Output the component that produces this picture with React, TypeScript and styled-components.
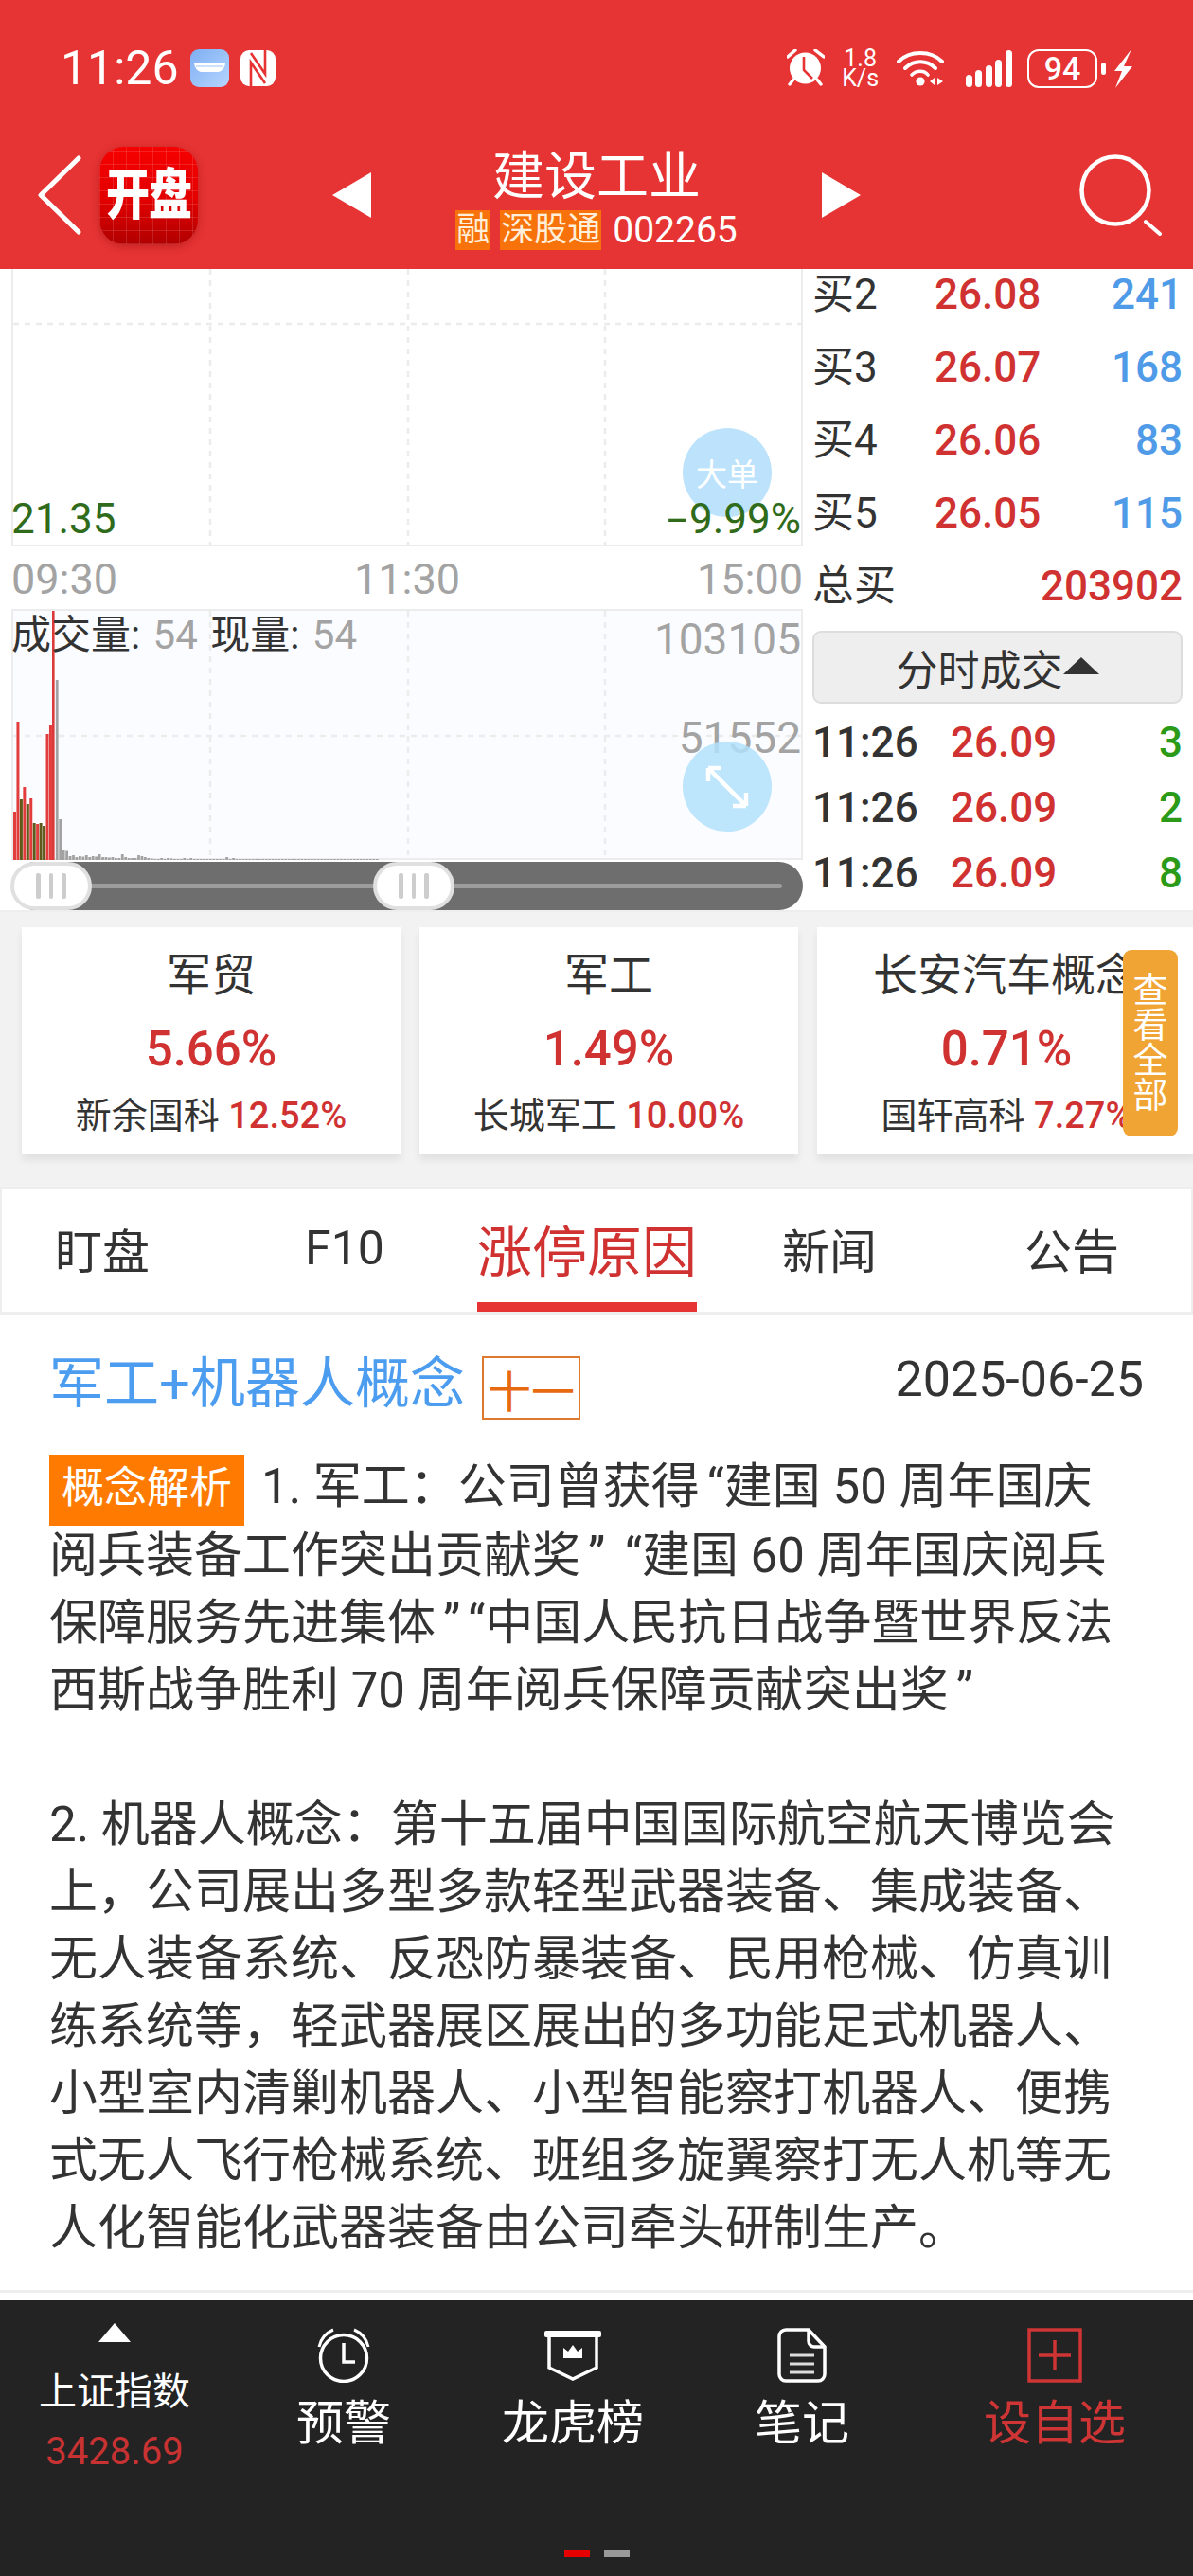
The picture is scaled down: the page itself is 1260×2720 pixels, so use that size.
import React from 'react';
import styled, { createGlobalStyle } from 'styled-components';

const RED = '#e63333';
const PRICE_RED = '#d03232';
const FONT = 'Roboto, "Noto Sans CJK SC", sans-serif';

const bids = [
  { label: '买2', price: '26.08', qty: '241' },
  { label: '买3', price: '26.07', qty: '168' },
  { label: '买4', price: '26.06', qty: '83' },
  { label: '买5', price: '26.05', qty: '115' },
];

const trades = [
  { time: '11:26', price: '26.09', qty: '3' },
  { time: '11:26', price: '26.09', qty: '2' },
  { time: '11:26', price: '26.09', qty: '8' },
];

const sectors = [
  { name: '军贸', pct: '5.66%', stock: '新余国科', stockPct: '12.52%' },
  { name: '军工', pct: '1.49%', stock: '长城军工', stockPct: '10.00%' },
  { name: '长安汽车概念', pct: '0.71%', stock: '国轩高科', stockPct: '7.27%' },
];

const tabs = ['盯盘', 'F10', '涨停原因', '新闻', '公告'];

const redBars = [51, 146, 0, 77, 0, 65, 0, 38, 0, 0, 133, 143];
const greenBars = [0, 0, 64, 0, 59, 0, 39, 0, 39, 36, 0, 0];
const grayBars = [
  190, 43, 10, 9.5, 4, 5, 3, 4, 3.5, 5, 3, 4, 3.5, 6, 3, 3, 2.5, 3, 2, 2, 6, 3, 2, 2, 2, 5, 4, 3, 2, 1.5, 1,
  1, 2, 1, 2, 1.5, 1, 1, 1, 2, 1, 2, 1, 1, 1, 1, 1, 1, 1, 1, 1, 1, 3, 1, 2, 1, 1, 1, 1, 1, 1, 1, 1, 1, 1, 1, 1, 1, 1, 1,
  1, 1, 1, 1, 1, 1, 1, 1, 1, 1, 1, 1, 1, 1, 1, 1, 1, 1, 1, 1, 1, 1, 1, 1, 1, 1, 1, 1, 1,
];

const GridLines = ({ height, rowY }: { height: number; rowY: number }) => (
  <GridSvg viewBox={`0 0 832 ${height}`} width="832" height={height}>
    {[208, 417, 625].map((x) => (
      <line key={x} x1={x} y1="0" x2={x} y2={height} stroke="#ececec" strokeWidth="2.5" strokeDasharray="6 6" />
    ))}
    <line x1="0" y1={rowY} x2="832" y2={rowY} stroke="#ececec" strokeWidth="2.5" strokeDasharray="6 6" />
  </GridSvg>
);

const VolumeBars = () => {
  const h = 263;
  const step = 3.45;
  return (
    <GridSvg viewBox={`0 0 832 ${h}`} width="832" height={h}>
      {redBars.map((v, i) =>
        v ? <rect key={`r${i}`} x={i * step} y={h - v} width="3" height={v} fill="#e23c3c" /> : null,
      )}
      {greenBars.map((v, i) =>
        v ? <rect key={`g${i}`} x={i * step} y={h - v} width="3" height={v} fill="#5e5a1c" /> : null,
      )}
      {grayBars.map((v, i) => (
        <rect key={`n${i}`} x={(i + 13) * step} y={h - v} width="2.8" height={v} fill="#a2a2a2" />
      ))}
      <rect x="41" y="0" width="2.6" height={h} fill="#dc3a3a" />
    </GridSvg>
  );
};

const App = () => (
  <Page>
    <GlobalStyle />
    <Header>
      <StatusBar>
        <StatusLeft>
          <Clock>11:26</Clock>
          <svg width="41" height="40" viewBox="0 0 41 40">
            <defs>
              <linearGradient id="pill" x1="0" y1="0" x2="1" y2="1">
                <stop offset="0" stopColor="#7eaef2" />
                <stop offset="1" stopColor="#b6d6ff" />
              </linearGradient>
            </defs>
            <rect width="41" height="40" rx="9" fill="url(#pill)" />
            <path d="M4 15 H37 Q36 22 30 24 H11 Q5 22 4 15 Z" fill="#fff" />
            <path d="M6 18 H35" stroke="#9cc3f7" strokeWidth="1" />
          </svg>
          <svg width="37" height="38" viewBox="0 0 37 38">
            <rect width="37" height="38" rx="9" fill="#fff" />
            <path d="M11 38 V13 L26 35 M26 0 V25 L11 3" fill="none" stroke={RED} strokeWidth="2.6" />
          </svg>
        </StatusLeft>
        <StatusRight>
          <svg width="40" height="40" viewBox="0 0 40 40">
            <circle cx="19.5" cy="20" r="16.5" fill="#fff" />
            <path d="M18 8 V22 L27 31" fill="none" stroke={RED} strokeWidth="2.6" />
            <path d="M1 8 L9 1 M30 1 L39 8 M3 37 L7 32 M36 37 L32 32" stroke="#fff" strokeWidth="3.4" strokeLinecap="round" />
          </svg>
          <Speed>
            <span>1.8</span>
            <span>K/s</span>
          </Speed>
          <svg width="50" height="37" viewBox="0 0 50 37">
            <path d="M2 11 C14 -1 36 -1 48 11" fill="none" stroke="#fff" strokeWidth="4" strokeLinecap="round" />
            <path d="M9 18 C18 9 32 9 41 18" fill="none" stroke="#fff" strokeWidth="4" strokeLinecap="round" />
            <path d="M16 25 C21 20 29 20 33 25" fill="none" stroke="#fff" strokeWidth="3.6" strokeLinecap="round" />
            <circle cx="25" cy="32" r="4.6" fill="#fff" />
            <path d="M40 28 V36 L35 32 Z M43 28 V36 L49 32 Z" fill="#fff" />
          </svg>
          <SignalBars>
            {[13, 18, 23, 29, 39].map((barHeight) => (
              <SignalBar key={barHeight} $height={barHeight} />
            ))}
          </SignalBars>
          <Battery>
            <BatteryBody>94</BatteryBody>
            <BatteryNub />
          </Battery>
          <svg width="19" height="41" viewBox="0 0 19 41">
            <polygon points="18,0 0,23 8,23 1,41 19,18 10,18" fill="#fff" />
          </svg>
        </StatusRight>
      </StatusBar>
      <NavBar>
        <NavLeft>
          <svg width="46" height="84" viewBox="0 0 46 84">
            <path d="M43 3 L3 42 L43 81" fill="none" stroke="#fff" strokeWidth="5" strokeLinecap="round" strokeLinejoin="round" />
          </svg>
          <Logo>
            <LogoText>开盘</LogoText>
          </Logo>
        </NavLeft>
        <NavCenter>
          <svg width="41" height="48" viewBox="0 0 41 48">
            <polygon points="41,0 41,48 0,24" fill="#fff" />
          </svg>
          <TitleBlock>
            <StockName>建设工业</StockName>
            <StockMeta>
              <StockTag>融</StockTag>
              <StockTag>深股通</StockTag>
              <StockCode>002265</StockCode>
            </StockMeta>
          </TitleBlock>
          <svg width="41" height="48" viewBox="0 0 41 48">
            <polygon points="0,0 0,48 41,24" fill="#fff" />
          </svg>
        </NavCenter>
        <NavRight>
          <svg width="88" height="86" viewBox="0 0 88 86">
            <circle cx="38" cy="38" r="35.5" fill="none" stroke="#fff" strokeWidth="4.5" />
            <path d="M70 71 L85 84" stroke="#fff" strokeWidth="4" strokeLinecap="round" />
          </svg>
        </NavRight>
      </NavBar>
    </Header>

    <Quote>
      <ChartColumn>
        <PricePanel>
          <GridLines height={291} rowY={58} />
          <BigOrder>大单</BigOrder>
          <PriceLow>21.35</PriceLow>
          <PctLow>
            <Dash>-</Dash>9.99%
          </PctLow>
        </PricePanel>
        <TimeAxis>
          <span>09:30</span>
          <span>11:30</span>
          <span>15:00</span>
        </TimeAxis>
        <VolumePanel>
          <GridLines height={263} rowY={132} />
          <VolumeBars />
          <VolumeLegend>
            成交量: <em>54</em> 现量: <em>54</em>
          </VolumeLegend>
          <VolumeMax>103105</VolumeMax>
          <VolumeMid>51552</VolumeMid>
          <ExpandButton>
            <svg width="46" height="46" viewBox="0 0 46 46">
              <path d="M3 3 L43 43 M3 3 V17 M3 3 H17 M43 43 V29 M43 43 H29" fill="none" stroke="#fff" strokeWidth="4.5" />
            </svg>
          </ExpandButton>
        </VolumePanel>
        <Slider>
          <SliderTrack />
          <SliderHandle $left={-1}>
            <i />
            <i />
            <i />
          </SliderHandle>
          <SliderHandle $left={382}>
            <i />
            <i />
            <i />
          </SliderHandle>
        </Slider>
      </ChartColumn>
      <OrderColumn>
        {bids.map((b) => (
          <OrderRow key={b.label}>
            <OrderLabel>{b.label}</OrderLabel>
            <OrderPrice>{b.price}</OrderPrice>
            <OrderQty $color="#4f9be8">{b.qty}</OrderQty>
          </OrderRow>
        ))}
        <TotalRow>
          <OrderLabel>总买</OrderLabel>
          <TotalValue>203902</TotalValue>
        </TotalRow>
        <TradeToggle>
          分时成交
          <ToggleCaret />
        </TradeToggle>
        <TradeList>
          {trades.map((t, i) => (
            <TradeRow key={i}>
              <TradeTime>{t.time}</TradeTime>
              <OrderPrice>{t.price}</OrderPrice>
              <OrderQty $color="#2a9a18">{t.qty}</OrderQty>
            </TradeRow>
          ))}
        </TradeList>
      </OrderColumn>
    </Quote>

    <SectorBand>
      <SectorRow>
        {sectors.map((s) => (
          <SectorCard key={s.name}>
            <SectorName>{s.name}</SectorName>
            <SectorPct>{s.pct}</SectorPct>
            <SectorStock>
              {s.stock} <b>{s.stockPct}</b>
            </SectorStock>
          </SectorCard>
        ))}
      </SectorRow>
      <ViewAll>查看全部</ViewAll>
    </SectorBand>

    <TabBar>
      <TabGrid>
        {tabs.map((t, i) => (
          <Tab key={t} $active={i === 2}>
            {t}
          </Tab>
        ))}
      </TabGrid>
    </TabBar>

    <Article>
      <ArticleHead>
        <ArticleTitle>
          <ConceptName>军工+机器人概念</ConceptName>
          <CountBox>十一</CountBox>
        </ArticleTitle>
        <ArticleDate>2025-06-25</ArticleDate>
      </ArticleHead>
      <Body>
        <BodyTag>概念解析</BodyTag>1. 军工：公司曾获得<Quo>“</Quo>建国 50 周年国庆
        <br />
        阅兵装备工作突出贡献奖<Quo>”</Quo> <Quo>“</Quo>建国 60 周年国庆阅兵
        <br />
        保障服务先进集体<Quo>”</Quo><Quo>“</Quo>中国人民抗日战争暨世界反法
        <br />
        西斯战争胜利 70 周年阅兵保障贡献突出奖<Quo>”</Quo>
        <br />
        <br />
        2. 机器人概念：第十五届中国国际航空航天博览会
        <br />
        上，公司展出多型多款轻型武器装备、集成装备、
        <br />
        无人装备系统、反恐防暴装备、民用枪械、仿真训
        <br />
        练系统等，轻武器展区展出的多功能足式机器人、
        <br />
        小型室内清剿机器人、小型智能察打机器人、便携
        <br />
        式无人飞行枪械系统、班组多旋翼察打无人机等无
        <br />
        人化智能化武器装备由公司牵头研制生产。
      </Body>
    </Article>
    <Divider />

    <Footer>
      <FooterGrid>
        <IndexItem>
          <svg width="34" height="20" viewBox="0 0 34 20">
            <polygon points="17,0 34,20 0,20" fill="#fff" />
          </svg>
          <IndexName>上证指数</IndexName>
          <IndexValue>3428.69</IndexValue>
        </IndexItem>
        <FooterItem>
          <FooterIcon>
            <svg width="56" height="58" viewBox="0 0 56 58">
              <circle cx="28" cy="32" r="24.5" fill="none" stroke="#fff" strokeWidth="3.5" />
              <path d="M28 16 V36 H40" fill="none" stroke="#fff" strokeWidth="3.5" />
              <path d="M2 20 C4 11 10 5 17 2 M54 20 C52 11 46 5 39 2" fill="none" stroke="#fff" strokeWidth="3" />
            </svg>
          </FooterIcon>
          <FooterLabel>预警</FooterLabel>
        </FooterItem>
        <FooterItem>
          <FooterIcon>
            <svg width="60" height="54" viewBox="0 0 60 54" style={{ marginTop: 3 }}>
              <rect x="0" y="0" width="60" height="7" rx="2" fill="#fff" />
              <path d="M5 6 V39 L30 51 L55 39 V6" fill="none" stroke="#fff" strokeWidth="3.5" />
              <polygon points="20,29 20,18 25,22 30,15 35,22 40,18 40,29" fill="#fff" />
            </svg>
          </FooterIcon>
          <FooterLabel>龙虎榜</FooterLabel>
        </FooterItem>
        <FooterItem>
          <FooterIcon>
            <svg width="52" height="58" viewBox="0 0 52 58">
              <path d="M9 2 H33 L50 20 V49 A7 7 0 0 1 43 56 H9 A7 7 0 0 1 2 49 V9 A7 7 0 0 1 9 2 Z" fill="none" stroke="#fff" strokeWidth="3.5" />
              <path d="M33 2 V14 A6 6 0 0 0 39 20 H50" fill="none" stroke="#fff" strokeWidth="3.5" />
              <path d="M13 29 H39 M13 38 H39 M13 47 H39" stroke="#ddd" strokeWidth="3" />
            </svg>
          </FooterIcon>
          <FooterLabel>笔记</FooterLabel>
        </FooterItem>
        <FooterItem>
          <FooterIcon>
            <svg width="58" height="58" viewBox="0 0 58 58">
              <rect x="2" y="2" width="54" height="54" fill="none" stroke="#cf3535" strokeWidth="3.5" />
              <path d="M29 13 V45 M12 29 H46" stroke="#cf3535" strokeWidth="3.5" />
            </svg>
          </FooterIcon>
          <FooterLabel $active>设自选</FooterLabel>
        </FooterItem>
      </FooterGrid>
      <PageDots>
        <PageDot $active />
        <PageDot />
      </PageDots>
    </Footer>
  </Page>
);

const GlobalStyle = createGlobalStyle`
  html, body {
    margin: 0;
    padding: 0;
    background: #fff;
  }
  * {
    box-sizing: border-box;
  }
`;

const Page = styled.div`
  width: 1260px;
  height: 2720px;
  display: flex;
  flex-direction: column;
  overflow: hidden;
  background: #fff;
  font-family: ${FONT};
  color: #333;
`;

const Header = styled.header`
  height: 284px;
  flex: none;
  background: ${RED};
  color: #fff;
`;

const StatusBar = styled.div`
  height: 144px;
  display: flex;
  align-items: center;
  justify-content: space-between;
  padding: 0 64px;
`;

const StatusLeft = styled.div`
  display: flex;
  align-items: center;
  gap: 12px;
`;

const Clock = styled.span`
  font-size: 50px;
  line-height: 1;
`;

const StatusRight = styled.div`
  display: flex;
  align-items: center;
  gap: 18px;
`;

const Speed = styled.div`
  width: 40px;
  display: flex;
  flex-direction: column;
  align-items: center;
  font-size: 25px;
  line-height: 21px;
`;

const SignalBars = styled.div`
  display: flex;
  align-items: flex-end;
  gap: 3.6px;
  height: 39px;
  margin-left: 5px;
`;

const SignalBar = styled.span<{ $height: number }>`
  width: 7px;
  height: ${({ $height }) => $height}px;
  background: #fff;
  border-radius: 3.5px;
`;

const Battery = styled.div`
  display: flex;
  align-items: center;
  gap: 4px;
  margin-left: -2px;
  margin-right: -9px;
`;

const BatteryBody = styled.div`
  width: 74px;
  height: 41px;
  border: 2.5px solid #fff;
  border-radius: 12px;
  display: flex;
  align-items: center;
  justify-content: center;
  font-size: 34px;
  font-weight: 500;
`;

const BatteryNub = styled.span`
  width: 5px;
  height: 13px;
  background: #fff;
  border-radius: 3px;
`;

const NavBar = styled.div`
  height: 140px;
  padding-bottom: 16px;
  display: grid;
  grid-template-columns: 1fr 559px 1fr;
  align-items: center;
`;

const NavLeft = styled.div`
  display: flex;
  align-items: center;
  gap: 19px;
  padding-left: 40px;
`;

const Logo = styled.div`
  width: 104px;
  height: 103px;
  border-radius: 26px;
  display: flex;
  align-items: center;
  justify-content: center;
  background-image: repeating-linear-gradient(90deg, rgba(255, 255, 255, 0.13) 0 1px, transparent 1px 14px),
    repeating-linear-gradient(0deg, rgba(255, 255, 255, 0.13) 0 1px, transparent 1px 14px),
    linear-gradient(180deg, #f60000 0%, #e20000 55%, #b00000 100%);
  box-shadow: 0 2px 8px rgba(120, 0, 0, 0.35);
`;

const LogoText = styled.span`
  font-size: 46px;
  font-weight: 900;
  line-height: 1;
  letter-spacing: -1px;
  white-space: nowrap;
  transform: scaleY(1.25);
`;

const NavCenter = styled.div`
  display: flex;
  align-items: center;
  justify-content: space-between;
`;

const TitleBlock = styled.div`
  display: flex;
  flex-direction: column;
  align-items: center;
  gap: 7px;
  margin-top: 9px;
`;

const StockName = styled.div`
  font-size: 55px;
  line-height: 58px;
`;

const StockMeta = styled.div`
  display: flex;
  align-items: center;
  gap: 10px;
  height: 42px;
`;

const StockTag = styled.span`
  height: 42px;
  padding: 0 1px;
  background: #f7720b;
  color: #ffeeda;
  font-size: 35px;
  line-height: 42px;
`;

const StockCode = styled.span`
  font-size: 39px;
  margin-left: 2px;
`;

const NavRight = styled.div`
  display: flex;
  justify-content: flex-end;
  padding-right: 32px;
`;

const Quote = styled.section`
  height: 677px;
  flex: none;
  display: flex;
  background: #fff;
`;

const ChartColumn = styled.div`
  width: 848px;
  flex: none;
  padding-left: 12px;
  display: flex;
  flex-direction: column;
`;

const Panel = styled.div`
  position: relative;
  width: 836px;
  flex: none;
  border: 2px solid #ececec;
`;

const PricePanel = styled(Panel)`
  height: 293px;
  border-top: none;
`;

const GridSvg = styled.svg`
  position: absolute;
  left: 0;
  top: 0;
  display: block;
`;

const ChartNumber = styled.span`
  position: absolute;
  font-size: 44px;
  line-height: 1;
`;

const PriceLow = styled(ChartNumber)`
  left: -2px;
  bottom: 5px;
  color: #2f6b1a;
`;

const PctLow = styled(ChartNumber)`
  right: 0;
  bottom: 5px;
  color: #2f6b1a;
`;

const Dash = styled.span`
  display: inline-block;
  margin: 0 7px 0 6px;
  transform: scaleX(1.7);
`;

const BigOrder = styled.div`
  position: absolute;
  left: 707px;
  top: 168px;
  width: 94px;
  height: 94px;
  border-radius: 50%;
  background: #bde3fc;
  color: #fff;
  font-size: 33px;
  display: flex;
  align-items: center;
  justify-content: center;
`;

const TimeAxis = styled.div`
  height: 67px;
  width: 836px;
  padding: 2px 0 0;
  display: flex;
  align-items: center;
  justify-content: space-between;
  font-size: 45px;
  color: #a3a3a3;
`;

const VolumePanel = styled(Panel)`
  height: 265px;
  background: #fbfcff;
`;

const VolumeLegend = styled.div`
  position: absolute;
  left: -2px;
  top: 1px;
  font-size: 42px;
  line-height: 50px;
  color: #333;
  white-space: nowrap;

  em {
    font-style: normal;
    color: #a3a3a3;
    margin: 0 3px;
  }
`;

const VolumeMax = styled(ChartNumber)`
  right: 0;
  top: 7px;
  font-size: 46px;
  color: #a3a3a3;
`;

const VolumeMid = styled(ChartNumber)`
  right: 0;
  top: 111px;
  font-size: 46px;
  color: #a3a3a3;
`;

const ExpandButton = styled.div`
  position: absolute;
  left: 707px;
  top: 138px;
  width: 94px;
  height: 95px;
  border-radius: 50%;
  background: rgba(178, 224, 252, 0.85);
  display: flex;
  align-items: center;
  justify-content: center;
`;

const Slider = styled.div`
  position: relative;
  width: 836px;
  height: 51px;
  margin-top: 2px;
  background: #6e6e6e;
  border-radius: 26px;
  display: flex;
  align-items: center;
  padding: 0 22px;
`;

const SliderTrack = styled.div`
  width: 100%;
  height: 5px;
  background: #9c9c9c;
  border-radius: 3px;
`;

const SliderHandle = styled.div<{ $left: number }>`
  position: absolute;
  top: 0;
  left: ${({ $left }) => $left}px;
  width: 86px;
  height: 51px;
  background: #fff;
  border: 4px solid #e0e0e0;
  border-radius: 26px;
  display: flex;
  align-items: center;
  justify-content: center;
  gap: 9px;

  i {
    width: 4.5px;
    height: 27px;
    background: #cdcdcd;
    border-radius: 2px;
  }
`;

const OrderColumn = styled.div`
  flex: 1;
  padding: 0 11px 0 12px;
  display: flex;
  flex-direction: column;
  gap: 23px;
`;

const OrderRow = styled.div`
  height: 54px;
  display: grid;
  grid-template-columns: 127px auto 1fr;
  align-items: center;
  font-size: 44px;
`;

const OrderLabel = styled.span`
  color: #333;
  font-size: 44px;
  line-height: 1;
  margin-left: -2px;
`;

const OrderPrice = styled.span`
  color: ${PRICE_RED};
  font-weight: 500;
`;

const OrderQty = styled.span<{ $color: string }>`
  color: ${({ $color }) => $color};
  font-weight: 500;
  text-align: right;
`;

const TotalRow = styled.div`
  height: 54px;
  display: flex;
  align-items: center;
  justify-content: space-between;
`;

const TotalValue = styled.span`
  color: ${PRICE_RED};
  font-size: 44px;
  font-weight: 500;
`;

const TradeToggle = styled.div`
  height: 77px;
  margin: -3px 0 0 -2px;
  background: #eee;
  border: 2px solid #ddd;
  border-radius: 9px;
  display: flex;
  align-items: center;
  justify-content: center;
  font-size: 44px;
  color: #333;
`;

const ToggleCaret = styled.span`
  width: 0;
  height: 0;
  margin-top: -4px;
  border-left: 19px solid transparent;
  border-right: 19px solid transparent;
  border-bottom: 18px solid #333;
`;

const TradeList = styled.div`
  display: flex;
  flex-direction: column;
  gap: 15px;
  margin-top: -9px;
`;

const TradeRow = styled(OrderRow)`
  grid-template-columns: 144px auto 1fr;
`;

const TradeTime = styled.span`
  color: #333;
  font-weight: 500;
  margin-left: -2px;
`;

const SectorBand = styled.section`
  position: relative;
  height: 292px;
  flex: none;
  background: #f2f2f2;
  border-top: 2px solid #eee;
  overflow: hidden;
`;

const SectorRow = styled.div`
  display: flex;
  gap: 20px;
  padding: 16px 0 0 23px;
`;

const SectorCard = styled.div`
  width: 400px;
  height: 240px;
  flex: none;
  background: #fff;
  box-shadow: 0 6px 8px rgba(0, 0, 0, 0.07);
  display: flex;
  flex-direction: column;
  align-items: center;
  white-space: nowrap;
`;

const SectorName = styled.div`
  font-size: 47px;
  line-height: 60px;
  margin-top: 21px;
`;

const SectorPct = styled.div`
  font-size: 51px;
  font-weight: 500;
  line-height: 60px;
  margin-top: 18px;
  color: ${PRICE_RED};
`;

const SectorStock = styled.div`
  font-size: 38px;
  line-height: 50px;
  margin-top: 15px;

  b {
    font-family: ${FONT};
    font-weight: 500;
    color: ${PRICE_RED};
    font-size: 38px;
  }
`;

const ViewAll = styled.div`
  position: absolute;
  right: 16px;
  top: 40px;
  width: 58px;
  height: 197px;
  background: #f0a433;
  border-radius: 9px;
  color: #fff;
  font-size: 37px;
  line-height: 37px;
  display: flex;
  align-items: center;
  justify-content: center;
  text-align: center;
  padding: 0 10px;
`;

const TabBar = styled.nav`
  height: 135px;
  flex: none;
  border: 2px solid #eee;
  border-bottom-width: 3px;
  background: #fff;
  overflow: hidden;
`;

const TabGrid = styled.div`
  display: grid;
  grid-template-columns: repeat(5, 256px);
  height: 100%;
  margin-left: -22px;
`;

const Tab = styled.div<{ $active?: boolean }>`
  position: relative;
  display: flex;
  align-items: center;
  justify-content: center;
  padding-bottom: 4px;
  font-size: ${({ $active }) => ($active ? 58 : 50)}px;
  color: ${({ $active }) => ($active ? PRICE_RED : '#333')};

  &::after {
    content: '';
    display: ${({ $active }) => ($active ? 'block' : 'none')};
    position: absolute;
    left: 12px;
    right: 12px;
    bottom: 0;
    height: 10px;
    background: ${RED};
  }
`;

const Article = styled.article`
  flex: 1;
  min-height: 0;
  padding: 44px 52px 0;
`;

const ArticleHead = styled.div`
  height: 67px;
  display: flex;
  justify-content: space-between;
  align-items: center;
`;

const ArticleTitle = styled.div`
  display: flex;
  align-items: center;
  gap: 18px;
`;

const ConceptName = styled.span`
  font-size: 58px;
  line-height: 67px;
  color: #4c9df0;
  margin-top: -8px;
`;

const CountBox = styled.span`
  width: 104px;
  height: 67px;
  border: 2px solid #dd7a30;
  color: #e86a10;
  font-size: 46px;
  display: flex;
  align-items: center;
  justify-content: center;
`;

const ArticleDate = styled.span`
  font-size: 52px;
  line-height: 1;
  margin: -18px 0 0;
`;

const Body = styled.p`
  margin: 35px 0 0;
  font-size: 51px;
  line-height: 71px;
  white-space: nowrap;
  color: #333;
`;

const Quo = styled.span`
  padding-left: 8px;
`;

const BodyTag = styled.span`
  background: #ff7a00;
  color: #fff;
  font-size: 45px;
  padding: 9px 13px 13px;
  margin-right: 18px;
`;

const Divider = styled.div`
  height: 3px;
  flex: none;
  margin-bottom: 8px;
  background: #eee;
`;

const Footer = styled.footer`
  height: 291px;
  flex: none;
  background: #232323;
  display: flex;
  flex-direction: column;
  justify-content: space-between;
  padding: 29px 0 20px;
`;

const FooterGrid = styled.div`
  display: grid;
  grid-template-columns: repeat(4, 242px) 1fr;
`;

const FooterItem = styled.div`
  display: flex;
  flex-direction: column;
  align-items: center;
  gap: 18px;
`;

const FooterIcon = styled.div`
  height: 58px;
  display: flex;
  align-items: flex-start;
`;

const FooterLabel = styled.span<{ $active?: boolean }>`
  font-size: 50px;
  line-height: 50px;
  color: ${({ $active }) => ($active ? '#cf3535' : '#fff')};
`;

const IndexItem = styled.div`
  display: flex;
  flex-direction: column;
  align-items: center;
  margin-top: -5px;
`;

const IndexName = styled.span`
  margin-top: 31px;
  font-size: 40px;
  line-height: 44px;
  color: #fff;
`;

const IndexValue = styled.span`
  margin-top: 19px;
  font-size: 40px;
  line-height: 44px;
  color: #c83232;
`;

const PageDots = styled.div`
  display: flex;
  justify-content: center;
  gap: 15px;
`;

const PageDot = styled.span<{ $active?: boolean }>`
  width: 27px;
  height: 7px;
  background: ${({ $active }) => ($active ? '#e60000' : '#999')};
`;

export default App;
